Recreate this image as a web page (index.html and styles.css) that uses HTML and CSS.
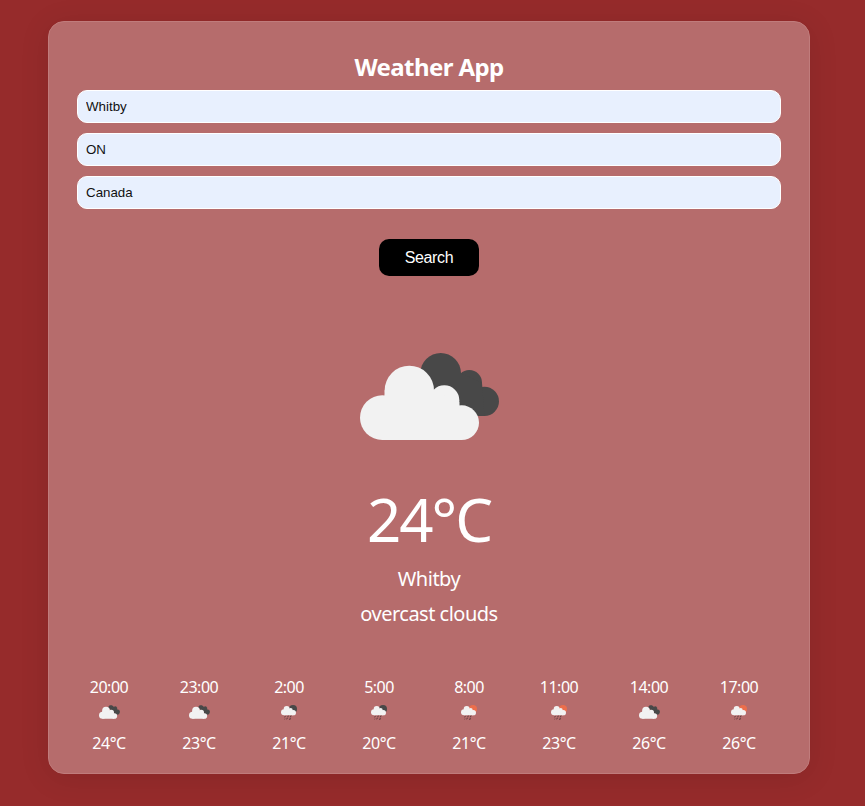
FILE: index.html
```html
<!DOCTYPE html>
<html lang="en">
<head>
<meta charset="utf-8">
<title>Weather App</title>
<link rel="stylesheet" href="styles.css">
</head>
<body>
<svg class="defs" width="0" height="0" aria-hidden="true">
  <symbol id="overcast" viewBox="60 39 417 261">
    <g fill="#484848"><circle cx="302" cy="100" r="61"/><circle cx="388" cy="128" r="38"/><circle cx="433" cy="184" r="44"/><path d="M241 100H363L426 128L433 228H360L250 170Z"/></g>
    <g fill="#f2f2f2"><circle cx="208" cy="151" r="74"/><circle cx="127" cy="233" r="67"/><circle cx="313" cy="181" r="45"/><circle cx="365" cy="248" r="52"/><path d="M134 151H282L358 185L365 300H127Z"/></g>
  </symbol>
  <symbol id="overcast-small" viewBox="0 0 63 42">
    <path d="M27 7L32 1H39L44 5L51 4L55 9L54 13L61 15L63 21L60 28L51 30Z" fill="#484848"/>
    <g fill="#f2f2f2"><circle cx="21" cy="17" r="11.5"/><circle cx="10.5" cy="31" r="10.5"/><circle cx="37" cy="22" r="8"/><circle cx="46" cy="33" r="8.5"/><path d="M10 17H32L44 24L46 41.5H10Z"/></g>
  </symbol>
  <symbol id="rain" viewBox="0 0 48 48">
    <circle class="orb" cx="36" cy="12" r="12"/>
    <g fill="#f2f2f2"><circle cx="17" cy="12" r="9"/><circle cx="9" cy="22" r="9"/><circle cx="29" cy="15" r="6"/><circle cx="37" cy="23" r="8"/><path d="M9 13H29L36 17L37 31H9Z"/></g>
    <path d="M13 33l-2 4M22 32l-2 5M30 32l-2 5M19 39l-2 4M28 39l-2 6M12 41l-1 2" stroke="#57393a" stroke-width="3" fill="none"/>
  </symbol>
</svg>
<main class="card">
  <h1 class="title">Weather App</h1>
  <form class="search">
    <input class="field" type="text" value="Whitby" aria-label="City">
    <input class="field" type="text" value="ON" aria-label="Province">
    <input class="field" type="text" value="Canada" aria-label="Country">
    <button class="button" type="button">Search</button>
  </form>
  <section class="current">
    <svg class="hero"><use href="#overcast"/></svg>
    <p class="temperature">24°C</p>
    <p class="detail place">Whitby</p>
    <p class="detail sky">overcast clouds</p>
  </section>
  <section class="forecast">
    <div class="hour"><span>20:00</span><svg class="icon cloud"><use href="#overcast-small"/></svg><span>24°C</span></div>
    <div class="hour"><span>23:00</span><svg class="icon cloud"><use href="#overcast-small"/></svg><span>23°C</span></div>
    <div class="hour"><span>2:00</span><svg class="icon rain night"><use href="#rain"/></svg><span>21°C</span></div>
    <div class="hour"><span>5:00</span><svg class="icon rain night"><use href="#rain"/></svg><span>20°C</span></div>
    <div class="hour"><span>8:00</span><svg class="icon rain day"><use href="#rain"/></svg><span>21°C</span></div>
    <div class="hour"><span>11:00</span><svg class="icon rain day"><use href="#rain"/></svg><span>23°C</span></div>
    <div class="hour"><span>14:00</span><svg class="icon cloud"><use href="#overcast-small"/></svg><span>26°C</span></div>
    <div class="hour"><span>17:00</span><svg class="icon rain day"><use href="#rain"/></svg><span>26°C</span></div>
  </section>
</main>
</body>
</html>
```
FILE: styles.css
```css
* { box-sizing: border-box; }
body {
  margin: 0;
  height: 806px;
  padding: 21px 55px 32px 48px;
  overflow: hidden;
  background: #962b2b;
  color: #fff;
  font-family: "Noto Sans", sans-serif;
}
.defs { position: absolute; }
.card {
  height: 753px;
  padding: 31px 28px 0;
  border: 1px solid #c07c7c;
  border-radius: 16px;
  background: #b66c6c;
  box-shadow: 0 4px 30px rgba(0, 0, 0, 0.1);
}
.title {
  margin: 0;
  height: 37px;
  line-height: 28px;
  font-size: 24px;
  font-weight: 700;
  letter-spacing: -0.6px;
  text-align: center;
}
.search { display: flex; flex-direction: column; gap: 10px; }
.field {
  height: 33px;
  padding: 0 8px;
  border: 1px solid #fff;
  border-radius: 10px;
  background: #e8f0fe;
  color: #111;
  font: 13.333px "Liberation Sans", sans-serif;
}
.button {
  align-self: center;
  width: 100px;
  height: 37px;
  margin-top: 20px;
  padding: 0;
  border: 0;
  border-radius: 10px;
  background: #000;
  color: #fff;
  font: 16px "Liberation Sans", sans-serif;
  letter-spacing: -0.4px;
}
.current { display: flex; flex-direction: column; align-items: center; padding-top: 77px; }
.hero { width: 139px; height: 87px; }
p { margin: 0; white-space: nowrap; }
.temperature { height: 82px; margin-top: 39px; line-height: 80px; font-size: 60px; letter-spacing: -2px; }
.detail { height: 35px; line-height: 35px; font-size: 20px; letter-spacing: -0.5px; }
.forecast {
  display: grid;
  grid-template-columns: repeat(8, 64px);
  column-gap: 26px;
  margin-top: 44px;
}
.hour { display: grid; grid-template-rows: 24px 32px 24px; justify-items: center; line-height: 24px; font-size: 16px; letter-spacing: -0.5px; }
.icon { margin-top: 6px; }
.cloud { width: 21px; height: 14px; }
.rain { width: 16px; height: 16px; }
.night { fill: #484848; }
.day { fill: #ec6e4c; }
```
